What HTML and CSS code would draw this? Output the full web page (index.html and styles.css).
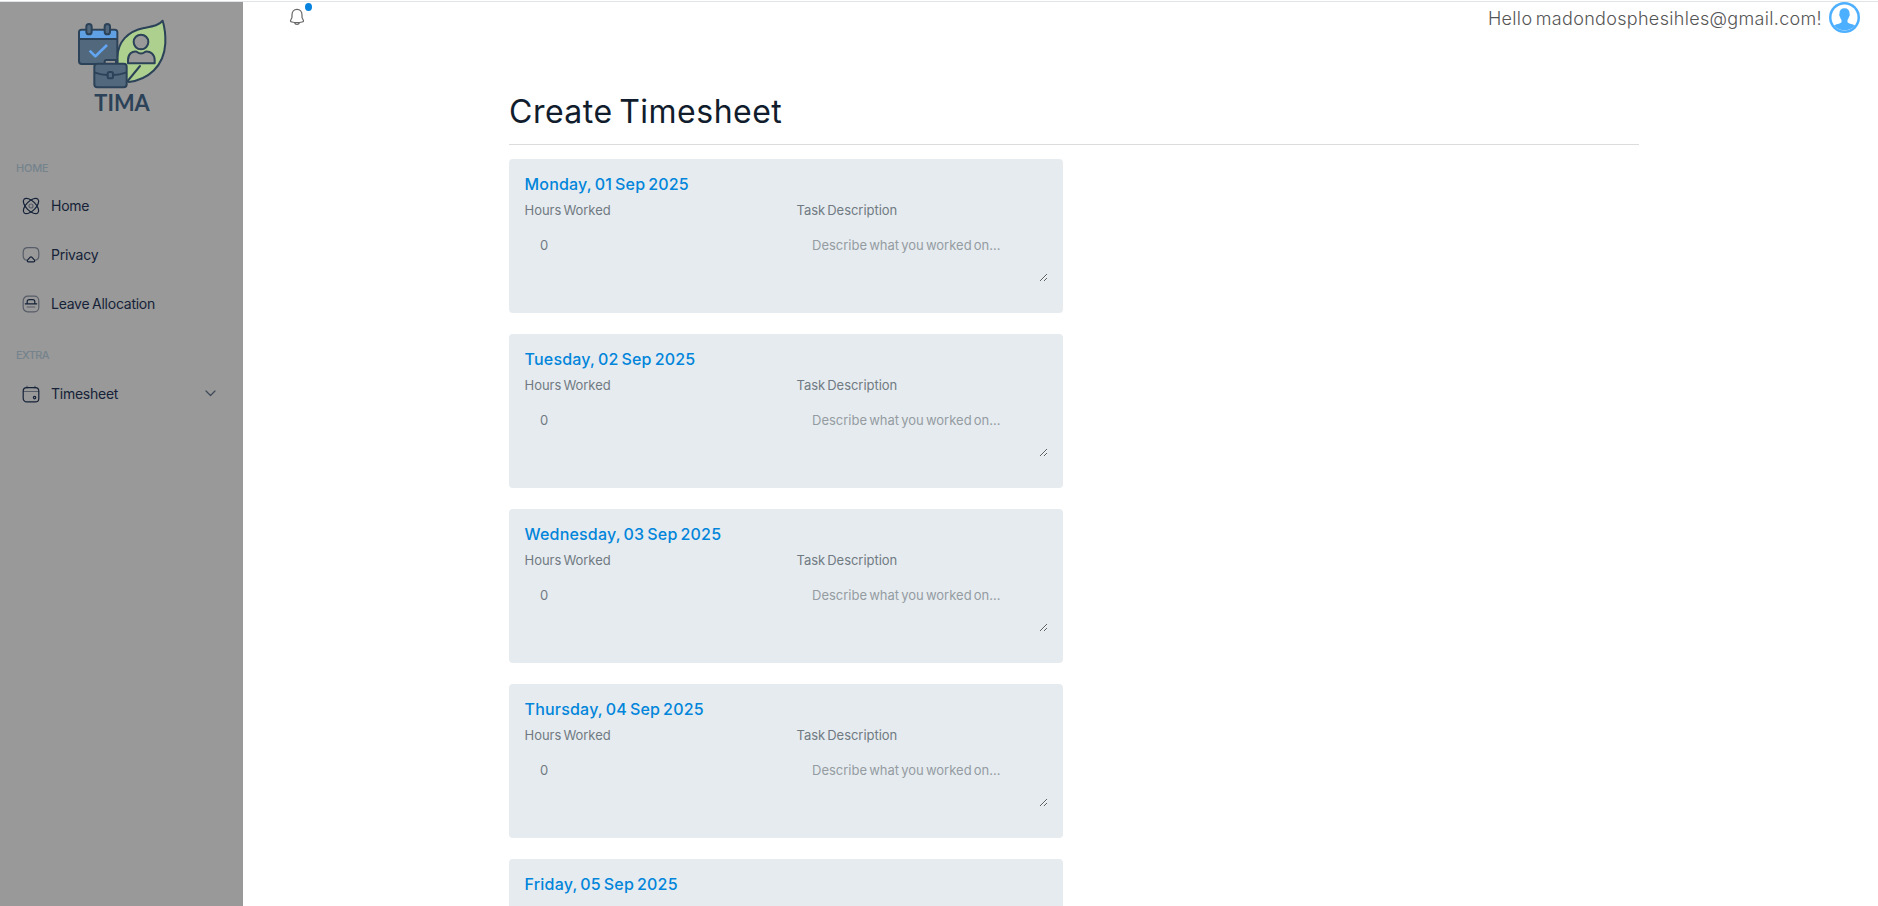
FILE: index.html
```html
<!DOCTYPE html>
<html lang="en">
<head>
<meta charset="utf-8">
<title>Create Timesheet</title>
<link rel="stylesheet" href="styles.css">
</head>
<body>
<div class="app">
  <aside class="sidebar">
    <a class="logo">
      <svg class="logo-art" viewBox="0 6 390 369" fill="none" stroke="#2b4258" stroke-width="6" stroke-linecap="round" stroke-linejoin="round">
        <path d="M308 62C298 76 278 79 252 84C202 94 174 126 172 172C171 205 183 232 206 246C264 238 312 200 316 130C317 104 314 82 308 62Z" fill="#aed08f"/>
        <path d="M203 243L240 198"/>
        <circle cx="243" cy="126" r="22" fill="#999"/>
        <path d="M204 190V180C204 162 216 153 230 155Q243 166 256 155C272 153 284 164 284 180V190Z" fill="#999"/>
        <rect x="57" y="89" width="115" height="103" rx="8" fill="#52687d"/>
        <path d="M60 116V96Q60 92 64 92H165Q169 92 169 96V116Z" fill="#60a0e4" stroke="none"/>
        <path d="M59 117H170"/>
        <rect x="79" y="72" width="16" height="31" rx="8" fill="#52687d"/>
        <rect x="134" y="72" width="16" height="31" rx="8" fill="#52687d"/>
        <path d="M89 152L106 169L141 135" stroke="#62a6f3" stroke-width="8" stroke-linecap="butt"/>
        <path d="M134 191V185Q134 180 139 180H168V191" fill="#999"/>
        <rect x="103" y="191" width="97" height="71" rx="9" fill="#52687d"/>
        <path d="M105 218Q124 225 142 225M160 225Q178 225 198 218"/>
        <rect x="143" y="216" width="16" height="19" rx="5" fill="#52687d"/>
        <text class="logo-text" x="103" y="332" textLength="166" lengthAdjust="spacingAndGlyphs">TIMA</text>
      </svg>
    </a>
    <nav class="menu">
      <h6 class="menu-caption">HOME</h6>
      <a class="menu-item">
        <svg class="icon" viewBox="0 0 18 18"><g transform="rotate(45 9 9)"><ellipse cx="9" cy="9" rx="9.7" ry="4.8"/><ellipse cx="9" cy="9" rx="4.8" ry="9.7"/></g><circle class="soft" cx="9" cy="9" r="2"/></svg>
        <span>Home</span>
      </a>
      <a class="menu-item">
        <svg class="icon" viewBox="0 0 18 18"><path class="soft" d="M4.6 14.2C2.2 13.8 1.2 12.7 1.2 9.8V6.5C1.2 3.1 2.5 1.7 6 1.7H12C15.5 1.7 16.8 3.1 16.8 6.5V9.8C16.8 12.7 15.8 13.8 13.4 14.2"/><path d="M8 11.4L5.7 13.9C5 14.8 5.4 15.8 6.5 15.8H11.5C12.6 15.8 13 14.8 12.3 13.9L10 11.4Q9 10.4 8 11.4Z"/></svg>
        <span>Privacy</span>
      </a>
      <a class="menu-item">
        <svg class="icon" viewBox="0 0 18 18"><rect class="soft" x="1.2" y="1.2" width="15.6" height="15.6" rx="4.5"/><path d="M3.3 8.8H14.7M5.2 8.6V6.6Q5.2 4.6 7.2 4.6H10.8Q12.8 4.6 12.8 6.6V8.6"/><path class="soft" d="M5.2 12H12.8"/></svg>
        <span>Leave Allocation</span>
      </a>
      <h6 class="menu-caption menu-caption-extra">EXTRA</h6>
      <a class="menu-item">
        <svg class="icon" viewBox="0 0 18 18"><rect x="1.2" y="2.7" width="15.6" height="14.2" rx="3.5"/><path class="soft" d="M1.5 6.5H16.5M5 1V3M13 1V3"/><circle cx="12.6" cy="12.6" r="1.2"/></svg>
        <span>Timesheet</span>
        <svg class="chevron" viewBox="0 0 11 7"><path d="M1 1L5.5 5.5L10 1"/></svg>
      </a>
    </nav>
  </aside>
  <div class="page">
    <header class="topbar">
      <a class="bell">
        <svg viewBox="0 0 16 18"><path d="M3 7C3 3.7 5 1.3 8 1.3S13 3.7 13 7V9Q13 10 14 11.5C15 13 14.5 13.7 13 14Q8 15.2 3 14C1.5 13.7 1 13 2 11.5Q3 10 3 9ZM5.5 14.6Q6 16.5 8 16.5T10.5 14.6"/></svg>
        <span class="dot"></span>
      </a>
      <div class="user">
        <span class="hello">Hello madondosphesihles@gmail.com!</span>
        <svg class="avatar" viewBox="0 0 31 31"><circle cx="15.5" cy="15.5" r="15.5" fill="#4dafff"/><circle cx="15.5" cy="15.5" r="13" fill="#fff"/><path d="M15.5 6.3C19.2 6.300 20.800 8.700 20.500 12C21.100 12.300 20.700 14.500 19.900 14.900C19.600 16.400 19 17.200 18.500 17.800V20.200C19.800 22 24.500 22.100 26 23.500A13.800 13.800 0 0 1 5 23.500C6.500 22.100 11.200 22 12.500 20.200V17.800C12 17.200 11.400 16.400 11.100 14.900C10.300 14.500 9.900 12.300 10.500 12C10.200 8.700 11.800 6.300 15.500 6.300Z" fill="#4dafff"/></svg>
      </div>
    </header>
    <main class="content">
      <h2 class="title">Create Timesheet</h2>
      <form class="days">
        <section class="card">
          <h5 class="day">Monday, 01 Sep 2025</h5>
          <div class="fields">
            <label class="field"><span>Hours Worked</span><input class="control" value="0"></label>
            <label class="field"><span>Task Description</span><textarea class="control" placeholder="Describe what you worked on..."></textarea></label>
          </div>
        </section>
        <section class="card">
          <h5 class="day">Tuesday, 02 Sep 2025</h5>
          <div class="fields">
            <label class="field"><span>Hours Worked</span><input class="control" value="0"></label>
            <label class="field"><span>Task Description</span><textarea class="control" placeholder="Describe what you worked on..."></textarea></label>
          </div>
        </section>
        <section class="card">
          <h5 class="day">Wednesday, 03 Sep 2025</h5>
          <div class="fields">
            <label class="field"><span>Hours Worked</span><input class="control" value="0"></label>
            <label class="field"><span>Task Description</span><textarea class="control" placeholder="Describe what you worked on..."></textarea></label>
          </div>
        </section>
        <section class="card">
          <h5 class="day">Thursday, 04 Sep 2025</h5>
          <div class="fields">
            <label class="field"><span>Hours Worked</span><input class="control" value="0"></label>
            <label class="field"><span>Task Description</span><textarea class="control" placeholder="Describe what you worked on..."></textarea></label>
          </div>
        </section>
        <section class="card">
          <h5 class="day">Friday, 05 Sep 2025</h5>
        </section>
      </form>
    </main>
  </div>
</div>
</body>
</html>
```

FILE: styles.css
```css
* { box-sizing: border-box; }
body {
  margin: 0;
  padding-top: 1px;
  height: 906px;
  overflow: hidden;
  background: #fff;
  font-family: Inter, "Liberation Sans", sans-serif;
}
h2, h5, h6 { margin: 0; }
.app {
  display: flex;
  height: 905px;
  overflow: hidden;
  border-top: 1px solid #dfe4e6;
}
.sidebar {
  flex: none;
  width: 243px;
  background: #999;
}
.logo { display: block; padding-left: 60px; }
.logo-art { display: block; width: 130px; height: 123px; }
.logo-text {
  font-family: Lato, sans-serif;
  font-size: 67px;
  font-weight: 700;
  fill: #2b4258;
  stroke: none;
}
.menu { padding-top: 35px; }
.menu-caption {
  height: 21px;
  padding-left: 16px;
  font-size: 11px;
  line-height: 16px;
  font-weight: 500;
  letter-spacing: -0.2px;
  color: #75838d;
}
.menu-caption-extra { margin-top: 19px; letter-spacing: -0.6px; }
.menu-item {
  display: flex;
  align-items: center;
  height: 49px;
  padding: 0 27px 0 22px;
  font-size: 14px;
  letter-spacing: -0.25px;
  word-spacing: -1px;
  color: #152238;
}
.menu-item span { flex: 1; margin-left: 11px; }
.menu-caption-extra + .menu-item { height: 51px; }
.icon { width: 18px; height: 18px; overflow: visible; }
.icon, .chevron, .bell svg { fill: none; stroke: #152238; stroke-width: 1.2; stroke-linecap: round; stroke-linejoin: round; }
.soft { opacity: 0.5; }
.chevron { width: 11px; height: 7px; stroke: #3f4a58; }
.page { flex: 1; }
.topbar {
  display: flex;
  justify-content: space-between;
  height: 78px;
  padding: 0 18px 0 46px;
}
.bell { position: relative; width: 24px; height: 26px; padding: 6px 0 0 0; }
.bell svg { display: block; width: 16px; height: 18px; stroke: #666; }
.dot {
  position: absolute;
  left: 16px;
  top: 1px;
  width: 7px;
  height: 8px;
  border-radius: 50%;
  background: #0583df;
}
.user { display: flex; align-items: flex-start; gap: 7px; }
.hello {
  padding-top: 4px;
  font-size: 18px;
  line-height: 25px;
  font-weight: 300;
  letter-spacing: 0.32px;
  word-spacing: -2px;
  color: #555;
}
.avatar { width: 31px; height: 31px; }
.content { width: 1130px; margin-left: 266px; }
.title {
  height: 65px;
  padding-top: 12px;
  border-bottom: 1px solid #dcdcdc;
  font-size: 32px;
  line-height: 40px;
  font-weight: 400;
  letter-spacing: 0.5px;
  word-spacing: -3px;
  color: #111c2d;
}
.days { width: 554px; padding-top: 14px; }
.card {
  height: 153.6px;
  margin-bottom: 21.5px;
  padding: 15px 15.5px;
  border-radius: 4px;
  background: #e6ebef;
}
.day {
  font-size: 16px;
  line-height: 20px;
  font-weight: 500;
  letter-spacing: 0.2px;
  word-spacing: -1.5px;
  color: #0085db;
}
.fields { display: grid; grid-template-columns: 251px 251px; gap: 21px; padding-top: 6px; }
.field {
  display: flex;
  flex-direction: column;
  font-size: 13px;
  line-height: 20px;
  letter-spacing: -0.03px;
  word-spacing: -1.5px;
  color: #707a82;
}
.control {
  display: block;
  width: 251px;
  height: 40px;
  margin: 4px 0 0;
  padding: 11px 16px 9px 15.5px;
  border: 0;
  outline: 0;
  background: transparent;
  font: inherit;
  letter-spacing: 0;
  word-spacing: -1.5px;
  color: #707a82;
}
textarea.control { height: 58px; overflow: auto; resize: vertical; }
.control::placeholder { color: #949ca2; opacity: 1; }
```
